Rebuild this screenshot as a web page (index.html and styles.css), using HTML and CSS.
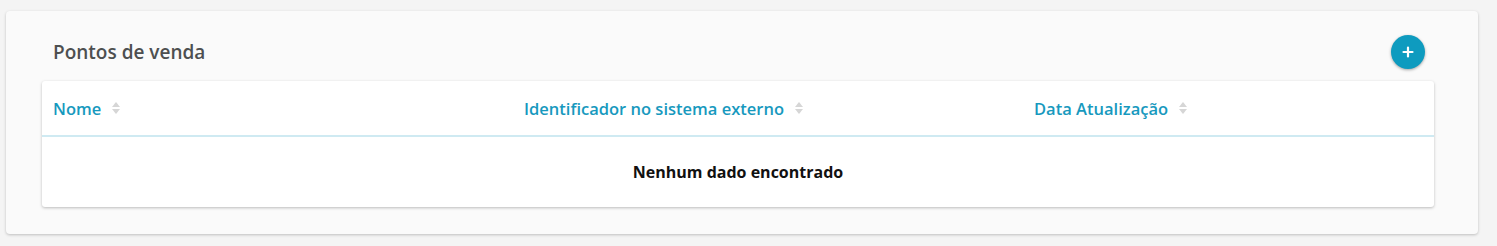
FILE: index.html
```html
<!DOCTYPE html>
<html lang="pt">
<head>
<meta charset="utf-8">
<title>Pontos de venda</title>
<link rel="stylesheet" href="styles.css">
</head>
<body>
<section class="card">
  <div class="card-head">
    <h2 class="title">Pontos de venda</h2>
    <button class="add-btn" aria-label="Adicionar">
      <svg width="12" height="12" viewBox="0 0 12 12"><path d="M6 1.5v9M1.5 6h9" stroke="#fff" stroke-width="2.2" stroke-linecap="round"/></svg>
    </button>
  </div>
  <div class="table">
    <div class="thead">
      <div class="th">Nome <span class="sort"></span></div>
      <div class="th">Identificador no sistema externo <span class="sort"></span></div>
      <div class="th">Data Atualização <span class="sort"></span></div>
    </div>
    <div class="empty">Nenhum dado encontrado</div>
  </div>
</section>
</body>
</html>
```
FILE: styles.css
```css
* { box-sizing: border-box; }
html, body { margin: 0; padding: 0; }
body {
  background: #f4f4f4;
  font-family: "Open Sans", Lato, sans-serif;
  width: 1497px;
  height: 246px;
  padding: 11px 0 0 6px;
}
.card {
  width: 1472px;
  height: 223px;
  background: #fafafa;
  border-radius: 4px;
  box-shadow: 0 1px 3px rgba(0,0,0,0.22);
  padding: 24px 44px 0 36px;
}
.card-head {
  display: flex;
  align-items: center;
  justify-content: space-between;
  height: 34px;
  margin-bottom: 12px;
  padding: 0 9px 0 11px;
}
.title {
  margin: 0;
  font-size: 19px;
  font-weight: 600;
  color: #4d4f50;
}
.add-btn {
  width: 34px;
  height: 34px;
  border-radius: 50%;
  border: none;
  background: #0e9bbf;
  box-shadow: 0 1px 3px rgba(0,0,0,0.35);
  display: flex;
  align-items: center;
  justify-content: center;
  padding: 0;
}
.table {
  background: #fff;
  border-radius: 3px;
  box-shadow: 0 1px 3px rgba(0,0,0,0.25);
  height: 126px;
}
.thead {
  display: grid;
  grid-template-columns: 471px 510px 1fr;
  height: 56px;
  border-bottom: 2px solid #cfeaf2;
  padding-left: 11px;
  align-items: center;
}
.th {
  font-size: 16.5px;
  font-weight: 600;
  color: #1799be;
  display: flex;
  align-items: center;
  gap: 11px;
}
.sort {
  display: inline-flex;
  flex-direction: column;
  gap: 2px;
}
.sort::before, .sort::after {
  content: "";
  width: 0;
  height: 0;
  border-left: 4px solid transparent;
  border-right: 4px solid transparent;
}
.sort::before { border-bottom: 5px solid #d6d6d6; }
.sort::after { border-top: 5px solid #d6d6d6; }
.empty {
  height: 70px;
  display: flex;
  align-items: center;
  justify-content: center;
  font-size: 16px;
  font-weight: 700;
  color: #111;
}
```
